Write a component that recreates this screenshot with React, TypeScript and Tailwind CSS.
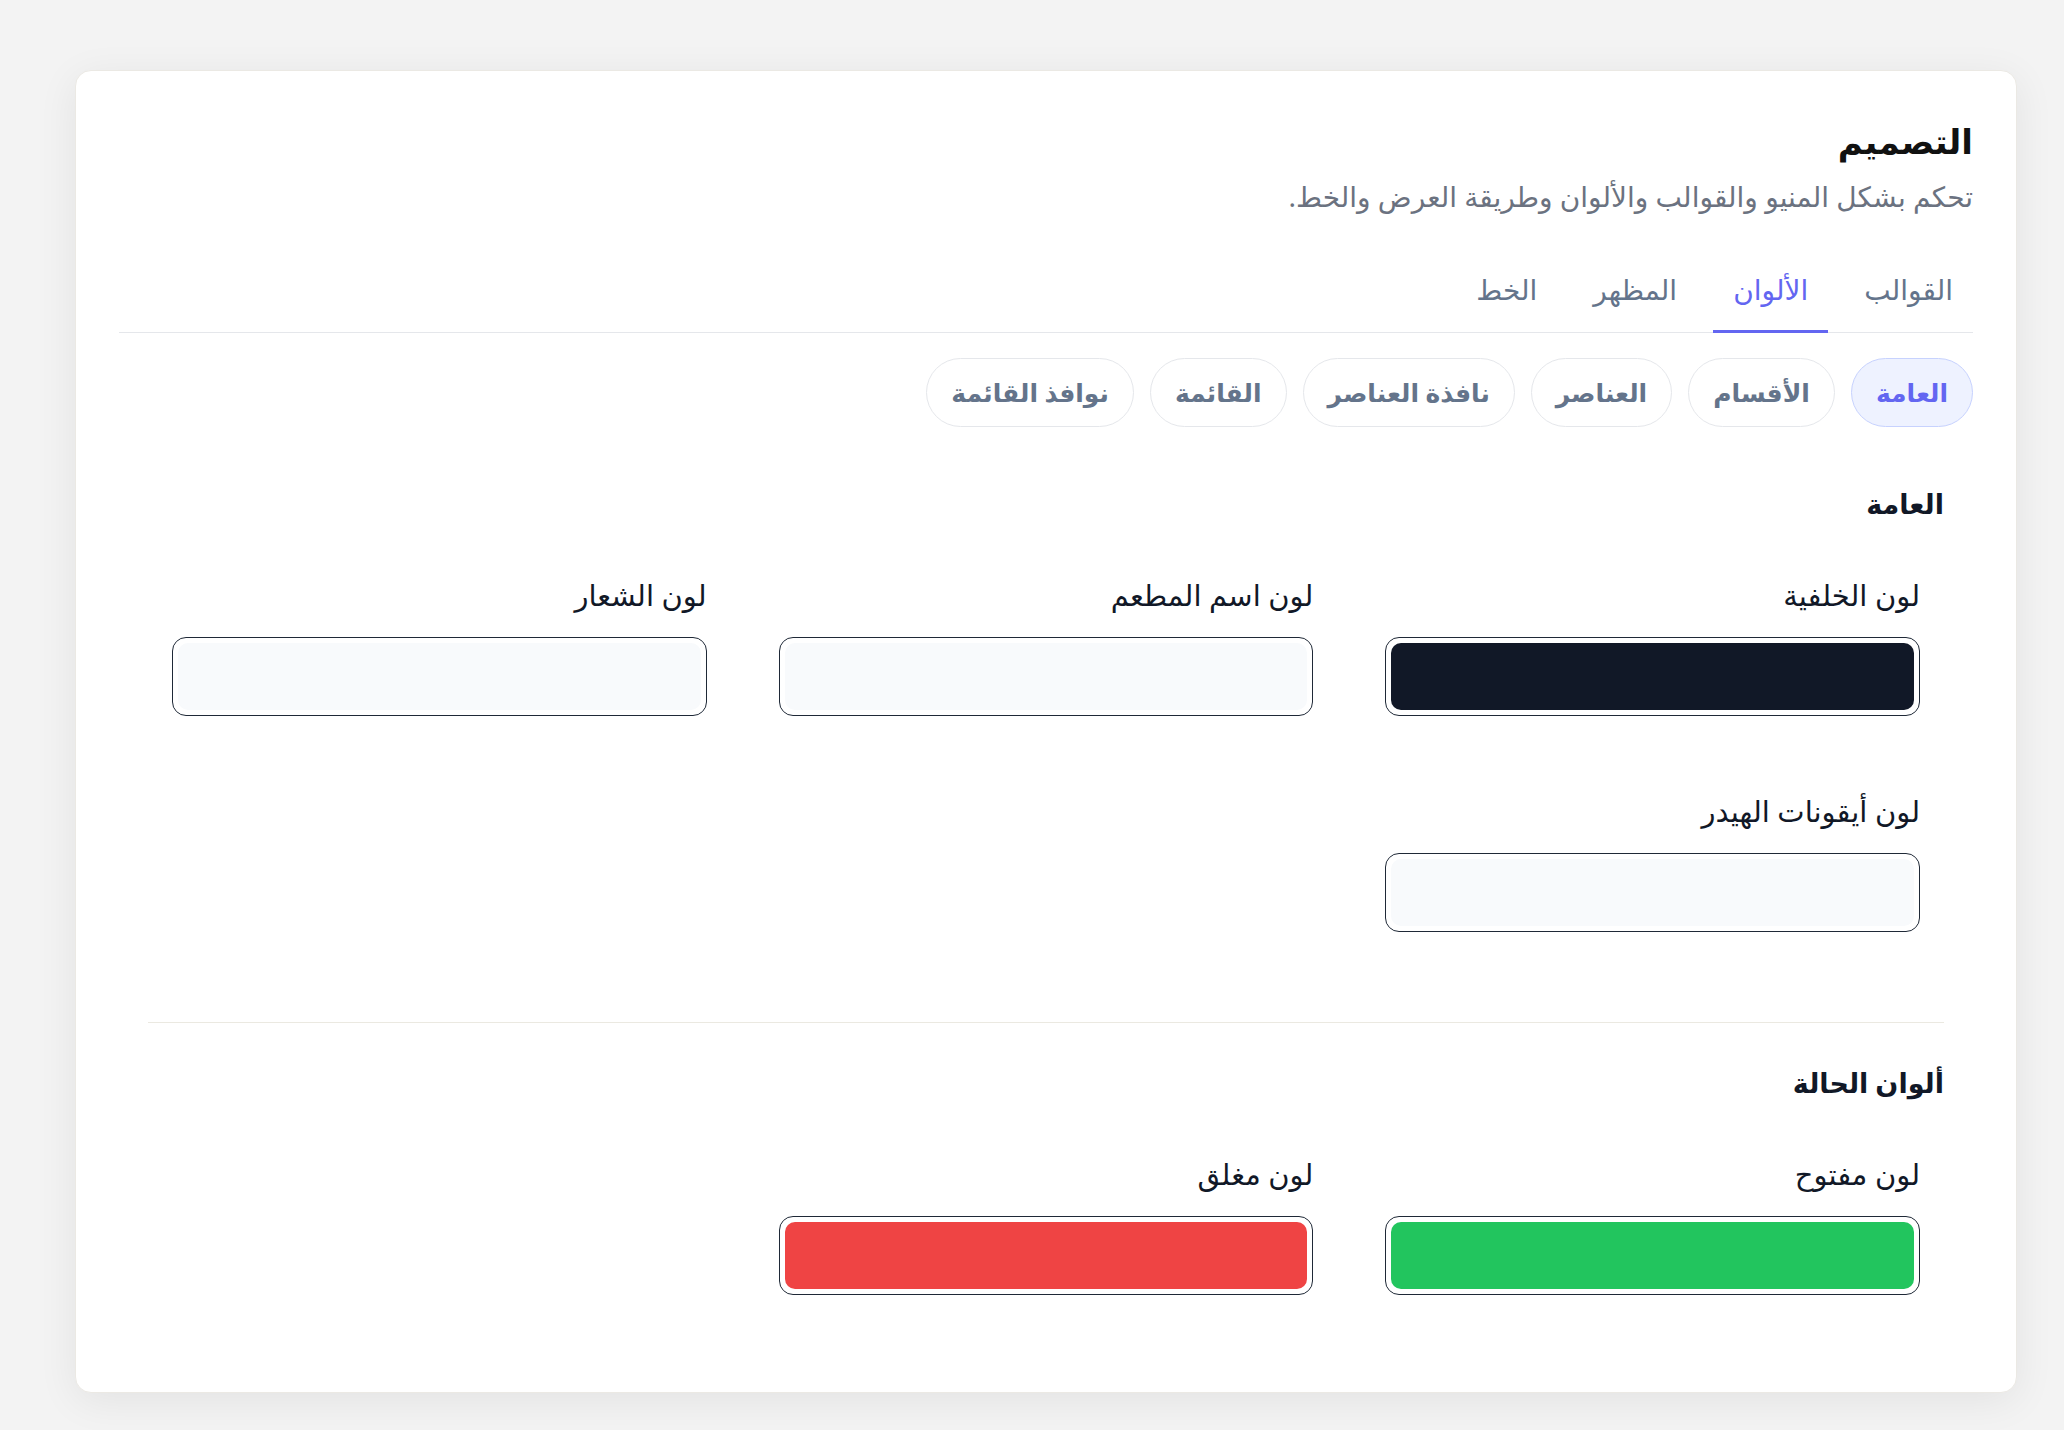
import { useState } from 'react'

const tabs = ['القوالب', 'الألوان', 'المظهر', 'الخط']
const groups = ['العامة', 'الأقسام', 'العناصر', 'نافذة العناصر', 'القائمة', 'نوافذ القائمة']

function ColorField({ label, color }: { label: string; color: string }) {
    return (
        <div className="flex flex-col">
            <label className="text-[29px] leading-[36px] text-[#111827]">{label}</label>
            <div className="mt-[24px] h-[79px] rounded-[14px] border border-[#1f2937] bg-white p-[5px]">
                <div className="h-full w-full rounded-[10px]" style={{ backgroundColor: color }} />
            </div>
        </div>
    )
}

export default function App() {
    const [tab, setTab] = useState('الألوان')
    const [group, setGroup] = useState('العامة')
    return (
        <div dir="rtl" className="min-h-screen bg-[#f3f3f3] pl-[75px] pr-[47px] pt-[70px] pb-[38px]" style={{ fontFamily: '"Noto Sans", "DejaVu Sans", sans-serif' }}>
            <div className="rounded-2xl border border-[#ebe9e4] bg-white px-[43px] pt-[46px] pb-[97px] shadow-[0_8px_40px_rgba(0,0,0,0.07)]">
                <h1 className="text-[34px] font-bold leading-[48px] text-[#111111]">التصميم</h1>
                <p className="mt-[13px] text-[28px] leading-[36px] text-[#6b7280]">تحكم بشكل المنيو والقوالب والألوان وطريقة العرض والخط.</p>

                <div className="mt-[57px] flex gap-4 border-b border-[#e5e7eb]">
                    {tabs.map(t => (
                        <button
                            key={t}
                            onClick={() => setTab(t)}
                            className={'-mb-px border-b-[3px] px-5 pb-[23px] text-[28px] leading-[36px] ' + (t === tab ? 'border-[#6366f1] text-[#6366f1]' : 'border-transparent text-[#64748b]')}
                        >
                            {t}
                        </button>
                    ))}
                </div>

                <div className="mt-[25px] flex gap-4">
                    {groups.map(g => (
                        <button
                            key={g}
                            onClick={() => setGroup(g)}
                            className={'rounded-full border px-6 py-[17px] text-[25px] font-bold leading-[33px] ' + (g === group ? 'border-[#c7d2fe] bg-[#eef2ff] text-[#6366f1]' : 'border-[#e5e7eb] bg-white text-[#64748b]')}
                        >
                            {g}
                        </button>
                    ))}
                </div>

                <div className="mt-[60px] px-[29px]">
                    <section className="pb-[90px]">
                        <h2 className="text-[27px] font-bold leading-[33px] text-[#111827]">العامة</h2>
                        <div className="mt-[57px] grid grid-cols-3 gap-x-[72px] gap-y-[77px] px-6">
                            <ColorField label="لون الخلفية" color="#111827" />
                            <ColorField label="لون اسم المطعم" color="#f8fafc" />
                            <ColorField label="لون الشعار" color="#f8fafc" />
                            <ColorField label="لون أيقونات الهيدر" color="#f8fafc" />
                        </div>
                    </section>

                    <section className="border-t border-[#ebe9e1] pt-[43px]">
                        <h2 className="text-[27px] font-bold leading-[33px] text-[#111827]">ألوان الحالة</h2>
                        <div className="mt-[57px] grid grid-cols-3 gap-x-[72px] px-6">
                            <ColorField label="لون مفتوح" color="#22c55e" />
                            <ColorField label="لون مغلق" color="#ef4444" />
                        </div>
                    </section>
                </div>
            </div>
        </div>
    )
}
